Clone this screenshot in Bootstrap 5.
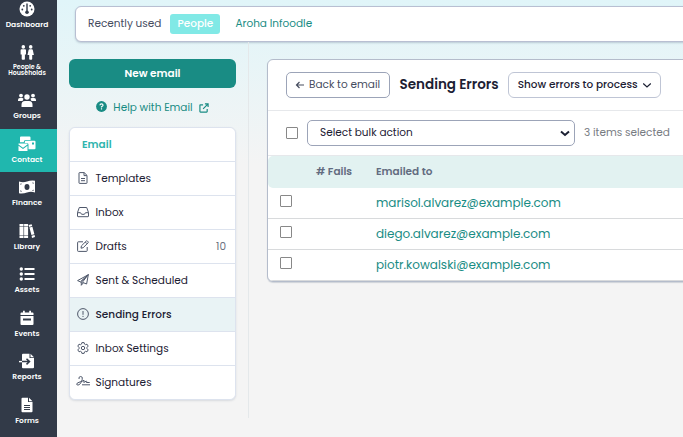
<!DOCTYPE html>
<html lang="en">
<head>
    <meta charset="UTF-8">
    <meta name="viewport" content="width=device-width, initial-scale=1.0">
    <title>Sending Errors</title>
    <link rel="stylesheet" href="https://cdn.jsdelivr.net/npm/bootstrap@5.3.0/dist/css/bootstrap.min.css">
    <style>
        body {
            font-family: Poppins, Inter, "Open Sans", sans-serif;
            font-size: 10.5px;
            line-height: 16px;
            color: #1c2033;
            height: 437px;
            overflow: hidden;
            background: #f4f4f4 linear-gradient(#e0f5f9 0, #f4f4f4 165px) no-repeat;
        }
        svg { display: block; flex: none; }
        a { color: #198c84; text-decoration: none; }

        /* Main navigation */
        .side-nav { width: 57px; height: 443px; margin-top: -6px; background: #323a48; flex: none; }
        .side-link { height: 43.5px; padding: 7px 3px 0 0; color: #fff; font-size: 7.5px; font-weight: 600; line-height: 8px; text-align: center; }
        .side-link svg { margin: 0 auto 4px; }
        .side-link.tall { height: 47.5px; padding-top: 7px; font-size: 6.3px; line-height: 6.3px; }
        .side-link.active { background: #20b7ae; }

        .recent-bar { height: 36px; margin: 6px -12px 0 18px; padding-left: 12px; background: #fff; border: 1px solid #b8bfd2; border-radius: 6px; box-shadow: 0 1px 2px rgba(60, 80, 110, .25); color: #464d5f; flex: none; }
        .recent-tag { height: 20px; line-height: 20px; width: 50px; margin: 0 15px 0 9px; background: #81e9e6; color: #fff; border-radius: 3px; text-align: center; font-weight: 500; }

        .left-col { width: 192px; height: 376px; padding: 17px 12px 0; border-right: 1px solid #e4e8ea; flex: none; }
        .btn-new { height: 29px; padding: 0; background: #198c84 !important; border: 0; border-radius: 6px; color: #fff !important; font-size: 10.5px; font-weight: 600; }
        .help-row { height: 39px; font-size: 10.5px; color: #198c84; }
        .mail-menu { border: 1px solid #dde3ee; border-radius: 6px; overflow: hidden; box-shadow: 0 1px 2px rgba(60, 80, 110, .15); background: #fff; }
        .mail-menu .list-group-item { height: 34px; padding: 0 9px 0 7px; border: 0; border-top: 1px solid #dde3ee; color: #1c2033; font-size: 10.5px; background: #fff; }
        .mail-menu .menu-title { height: 33px; border-top: 0; padding-left: 12px; color: #2fb5ae; font-weight: 600; }
        .mail-menu .current { background: #e9f3f5; font-weight: 500; }
        .mail-menu svg { margin: -2px 6.5px 0 0; color: #4f586b; }

        .errors-panel { margin: 17px -12px 0 18px; height: 223px; background: #fff; border: 1px solid #b4bccb; border-radius: 6px; box-shadow: 0 1px 1px rgba(60, 80, 110, .2); overflow: hidden; }
        .panel-top { height: 51px; padding-left: 18px; border-bottom: 1px solid #e6e8eb; }
        .panel-top .btn { height: 26px; padding: 0 8px; background: #fff; border: 1px solid #9ca4b8; border-radius: 5px; font-size: 10.5px; line-height: 16px; color: #464d5f; white-space: nowrap; }
        .panel-top .btn-back { width: 104px; }
        .panel-top .btn-filter { width: 153px; padding-left: 8.5px; border-color: #bfc5d5; border-radius: 6px; color: #1c2033; font-weight: 500; }
        .panel-title { font-size: 13.5px; font-weight: 600; margin: 0 9.5px; white-space: nowrap; }
        .bulk-row { height: 45px; padding-left: 18px; border-bottom: 1px solid #e6e8eb; }
        .bulk-select { width: 268px; height: 26px; margin: 0 9px; padding: 0 4px 0 12px; border: 1px solid #9ca4b8; border-radius: 5px; }
        .tick { appearance: none; width: 12px; height: 12px; margin: 0; border: 1px solid #888; border-radius: 1px; background: #fff; flex: none; }
        .error-head { height: 32px; background: #e2f2f1; border-radius: 5px 0 0 5px; color: #626c80; font-size: 10.5px; font-weight: 600; padding-left: 48px; }
        .error-row { height: 31px; padding-left: 12px; border-bottom: 1px solid #d8dadc; font-size: 12px; }
        .error-row .tick { margin: 0 84px 4px 0; }
    </style>
</head>
<body>
    <div class="d-flex">
        <nav class="side-nav d-flex flex-column">
            <a class="side-link" href="#">
                <svg width="16" height="16" viewBox="0 0 16 16" fill="currentColor"><circle cx="8" cy="8" r="7.5"/><g fill="#323a48"><circle cx="3.3" cy="8.5" r=".9"/><circle cx="4.8" cy="4.8" r=".9"/><circle cx="11.2" cy="4.8" r=".9"/><circle cx="12.7" cy="8.5" r=".9"/><circle cx="8" cy="11.2" r="1.8"/><path d="M7.3 2.5h1.4v8H7.3z"/></g></svg>
                Dashboard
            </a>
            <a class="side-link tall" href="#">
                <svg width="14" height="15" viewBox="0 0 14 15" fill="currentColor"><circle cx="3.3" cy="1.9" r="1.8"/><circle cx="10.7" cy="1.9" r="1.8"/><path d="M1.6 4.2h3.4q1 0 1 1V9.500H4.900V14q0 .8-.8.8H2.500q-.8 0-.8-.8V9.500H.6V5.200q0-1 1-1zM9.500 4.200h2.400q.7 0 .9.700l1.100 5.200h-1.700V14q0 .8-.8.8h-1.400q-.8 0-.8-.8v-3.900H7.500l1.100-5.200q.2-.7.9-.7z"/></svg>
                <div>People &amp;</div>
                <div>Households</div>
            </a>
            <a class="side-link" href="#">
                <svg width="18" height="16" viewBox="0 0 18 16" fill="currentColor"><circle cx="3" cy="3.600" r="1.900"/><circle cx="15" cy="3.600" r="1.900"/><circle cx="9" cy="5" r="2.700"/><path d="M0 9V8q0-1.900 1.900-1.900h2.300q.8 0 1.200.5Q5.300 8.200 4.400 9zM18 9V8q0-1.900-1.900-1.900h-2.300q-.8 0-1.200.5.100 1.600 1 2.400zM3.500 15v-2.200Q3.500 9 7 9h4q3.500 0 3.500 3.800V15z"/></svg>
                Groups
            </a>
            <a class="side-link active" href="#">
                <svg width="18" height="16" viewBox="0 0 18 16" fill="currentColor"><path d="M3 .5h8.500q1 0 1 1V4H8Q5.700 4 5.700 6.300H2V1.500q0-1 1-1z"/><path d="M8 4.800h8.500q1 0 1 1v6.400q0 1-1 1h-6V8.500q0-1.500-1.500-1.500H6.800V6q0-1.200 1.200-1.200zM14 6.500v2h2v-2z" fill-rule="evenodd"/><path d="M.5 7.500h9v1L5 11.700.5 8.500zM.5 9.700 5 13l4.500-3.300V15h-9z"/></svg>
                Contact
            </a>
            <a class="side-link" href="#">
                <svg width="18" height="16" viewBox="0 0 18 16" fill="currentColor"><path fill-rule="evenodd" d="M1 2.500q4 1.500 8 0t8-.8V13.500q-4-1.500-8 0T1 14.300zM9 5a2.500 3 0 1 0 0 6 2.500 3 0 0 0 0-6zM2.500 4.500V6L4 4.700zm0 8.200 1.500-.2L2.500 11zM15.500 3.500 14 3.700 15.500 5zm0 8.500v-1.500L14 11.800z"/></svg>
                Finance
            </a>
            <a class="side-link" href="#">
                <svg width="16" height="16" viewBox="0 0 16 16" fill="currentColor"><path d="M.5 1h4v2h-4zM.5 3.600h4v8.300h-4zM.5 12.500h4V15h-4zM5.100 1h4v2h-4zM5.100 3.600h4v8.300h-4zM5.100 12.500h4V15h-4zM9.600 2l3-.8.6 1.900-3 .8zM10.400 4.500l3-.8 2 7.600-3 .8zM12.600 12.700l3-.8.4 2.200-3 .9z"/></svg>
                Library
            </a>
            <a class="side-link" href="#">
                <svg width="16" height="16" viewBox="0 0 16 16" fill="currentColor"><circle cx="2.300" cy="3" r="1.700"/><circle cx="2.300" cy="8" r="1.700"/><circle cx="2.300" cy="13" r="1.700"/><path d="M5.500 2h10v2h-10zM5.500 7h10v2h-10zM5.500 12h10v2h-10z"/></svg>
                Assets
            </a>
            <a class="side-link" href="#">
                <svg width="14" height="16" viewBox="0 0 14 16" fill="currentColor"><path fill-rule="evenodd" d="M.5 5V3.500q0-1 1-1H3V.8h1.800v1.700h4.400V.8H11v1.700h1.500q1 0 1 1V5zM.5 6h13v8q0 1-1 1h-11q-1 0-1-1zM3 8.500v2h8v-2z"/></svg>
                Events
            </a>
            <a class="side-link" href="#">
                <svg width="16" height="16" viewBox="0 0 16 16" fill="currentColor"><path d="M4 .8h6.500V5H15v9.200q0 1-1 1H4q-1 0-1-1V1.800q0-1 1-1zM11.500.8 15 4.200h-3.500z"/><path d="M3 8.600h7M7.500 5.800l3 2.800-3 2.800" fill="none" stroke="#323a48" stroke-width="1.500"/><path d="M0 7.900h3v1.400H0z"/></svg>
                Reports
            </a>
            <a class="side-link" href="#">
                <svg width="12" height="16" viewBox="0 0 12 16" fill="currentColor"><path fill-rule="evenodd" d="M1.500.8H7v4.200h4.500v9.200q0 1-1 1h-9q-1 0-1-1V1.800q0-1 1-1zM8 .8l3.500 3.400H8zM3 8v1h6V8zm0 2v1h6v-1zm0 2v1h6v-1z"/></svg>
                Forms
            </a>
        </nav>

        <div class="flex-grow-1 d-flex flex-column">
            <div class="recent-bar d-flex align-items-center">
                <span>Recently used</span>
                <span class="recent-tag">People</span>
                <a href="#">Aroha Infoodle</a>
            </div>

            <div class="d-flex">
                <aside class="left-col">
                    <button class="btn btn-new w-100 d-block">New email</button>
                    <a class="help-row d-flex align-items-center justify-content-center" href="#">
                        <svg width="11" height="11" viewBox="0 0 12 12" style="margin: -3px 6px 0 0"><circle cx="6" cy="6" r="5.900" fill="#198c84"/><path d="M4.300 4.700Q4.400 3.200 6 3.200t1.700 1.400Q7.700 5.500 6 6.200v.8M6 8v1.300" fill="none" stroke="#fff" stroke-width="1.300"/></svg>
                        Help with Email
                        <svg width="10" height="10" viewBox="0 0 11 11" fill="none" stroke="currentColor" stroke-width="1.300" style="margin-left: 6px"><path d="M4.500 2H1.600q-.6 0-.6.600v6.800q0 .6.600.6h6.800q.6 0 .6-.6V6.500M6.500 1H10v3.500M10 1 4.500 6.500"/></svg>
                    </a>
                    <div class="mail-menu list-group">
                        <div class="list-group-item menu-title d-flex align-items-center">Email</div>
                        <a class="list-group-item d-flex align-items-center" href="#">
                            <svg width="12" height="12" viewBox="0 0 12 12" fill="none" stroke="currentColor"><path d="M2.500.6h4.700L10 3.400v7.500q0 .5-.5.500h-7q-.5 0-.5-.5V1.100q0-.5.500-.5zM7 .8v2.800h2.800M4 6.500h4M4 8.700h4"/></svg>
                            Templates
                        </a>
                        <a class="list-group-item d-flex align-items-center" href="#">
                            <svg width="12" height="12" viewBox="0 0 12 12" fill="none" stroke="currentColor"><path d="M2.300 1.500h7.400l1.800 5v3.700q0 .5-.5.500H1q-.5 0-.5-.5V6.500zM.5 6.700h3L4.600 8.300h2.800l1.100-1.600h3"/></svg>
                            Inbox
                        </a>
                        <a class="list-group-item d-flex align-items-center" href="#">
                            <svg width="12" height="12" viewBox="0 0 12 12" fill="none" stroke="currentColor"><path d="M6 1.800H1.300q-.7 0-.7.700v8.200q0 .7.700.7h8.200q.7 0 .7-.7V7M4 8.200l.4-2.300L9.300 1q.5-.5 1 0l.8.800q.5.500 0 1L6.200 7.700zM8.300 2l1.800 1.800"/></svg>
                            Drafts
                            <span class="ms-auto" style="color: #6c7280">10</span>
                        </a>
                        <a class="list-group-item d-flex align-items-center" href="#">
                            <svg width="12" height="12" viewBox="0 0 12 12" fill="none" stroke="currentColor" stroke-linejoin="round"><path d="M11.300.7.600 6.600l2.900 1.300zM11.300.7 9.600 10 5.300 8.300zM3.500 7.900l7.800-7.200M4.300 8v3.300l2-2.500"/></svg>
                            Sent &amp; Scheduled
                        </a>
                        <a class="list-group-item current d-flex align-items-center" href="#">
                            <svg width="12" height="12" viewBox="0 0 12 12" fill="none" stroke="currentColor"><circle cx="6" cy="6" r="5.400"/><path d="M6 3v3.800M6 7.900V9"/></svg>
                            Sending Errors
                        </a>
                        <a class="list-group-item d-flex align-items-center" href="#">
                            <svg width="12" height="12" viewBox="0 0 12 12" fill="none" stroke="currentColor" stroke-linejoin="round"><path d="M4.900.6h2.200l.4 1.500 1 .6 1.500-.5 1.200 1.900L10 5.300v1.400l1.200 1.200L10 9.800l-1.500-.5-1 .6-.4 1.500H4.900l-.4-1.500-1-.6-1.500.5L.8 7.900 2 6.700V5.300L.8 4.100 2 2.200l1.500.5 1-.6z"/><circle cx="6" cy="6" r="1.700"/></svg>
                            Inbox Settings
                        </a>
                        <a class="list-group-item d-flex align-items-center" href="#">
                            <svg width="14" height="12" viewBox="0 0 14 12" fill="none" stroke="currentColor" style="margin: -4px 5.5px 0 -1px"><path d="M3 4Q2.500 1.500 4.700 1.500 7 1.500 6.200 4.500 5.500 7.500 3.500 9.500 1.800 10.700.700 9.500.600 7.900 3 7.300 6 6.500 8 5.300 8.500 5.300 7.700 7.300q.2.400 1.300-.5l1.300-.8q.6.200.1 1.500h3.300M6 9.800h8"/></svg>
                            Signatures
                        </a>
                    </div>
                </aside>

                <main class="flex-grow-1">
                    <div class="errors-panel">
                        <div class="panel-top d-flex align-items-center">
                            <button class="btn btn-back d-flex align-items-center">
                                <svg width="10" height="10" viewBox="0 0 10 10" fill="none" stroke="currentColor" stroke-width="1.200" style="margin-right: 4px"><path d="M9 5H1.500M4.500 2l-3 3 3 3"/></svg>
                                Back to email
                            </button>
                            <h1 class="panel-title">Sending Errors</h1>
                            <button class="btn btn-filter d-flex align-items-center">
                                Show errors to process
                                <svg class="ms-1" width="10" height="10" viewBox="0 0 10 10" fill="none" stroke="currentColor" stroke-width="1.200"><path d="m1.200 3.500 3.800 3.500 3.800-3.500"/></svg>
                            </button>
                        </div>
                        <div class="bulk-row d-flex align-items-center">
                            <input class="tick" type="checkbox">
                            <div class="bulk-select d-flex align-items-center justify-content-between">
                                <span>Select bulk action</span>
                                <svg width="10" height="10" viewBox="0 0 10 10" fill="none" stroke="currentColor" stroke-width="2"><path d="m1 3.500 4 3.500 4-3.500"/></svg>
                            </div>
                            <span class="selected-count" style="color: #777b82">3 items selected</span>
                        </div>
                        <div class="error-head d-flex align-items-center">
                            <span style="width: 60px"># Fails</span>
                            <span>Emailed to</span>
                        </div>
                        <div class="error-row d-flex align-items-center">
                            <input class="tick" type="checkbox">
                            <a class="error-mail" href="#">marisol.alvarez@example.com</a>
                        </div>
                        <div class="error-row d-flex align-items-center">
                            <input class="tick" type="checkbox">
                            <a class="error-mail" href="#">diego.alvarez@example.com</a>
                        </div>
                        <div class="error-row d-flex align-items-center">
                            <input class="tick" type="checkbox">
                            <a class="error-mail" href="#">piotr.kowalski@example.com</a>
                        </div>
                    </div>
                </main>
            </div>
        </div>
    </div>
</body>
</html>
